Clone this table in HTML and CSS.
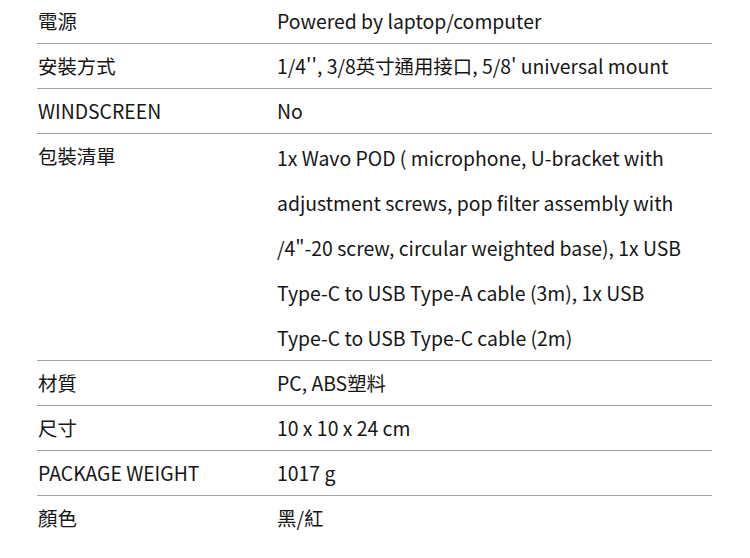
FILE: index.html
```html
<!DOCTYPE html>
<html lang="zh-Hant">
<head>
<meta charset="utf-8">
<link rel="stylesheet" href="styles.css">
</head>
<body>
<div class="specs">
  <div class="row"><div class="label">電源</div><div class="value">Powered by laptop/computer</div></div>
  <div class="row"><div class="label">安裝方式</div><div class="value">1/4'', 3/8英寸通用接口, 5/8' universal mount</div></div>
  <div class="row"><div class="label">WINDSCREEN</div><div class="value">No</div></div>
  <div class="row"><div class="label">包裝清單</div><div class="value value--long">1x Wavo POD ( microphone, U-bracket with adjustment screws, pop filter assembly with /4"-20 screw, circular weighted base), 1x USB Type-C to USB Type-A cable (3m), 1x USB Type-C to USB Type-C cable (2m)</div></div>
  <div class="row"><div class="label">材質</div><div class="value">PC, ABS塑料</div></div>
  <div class="row"><div class="label">尺寸</div><div class="value">10 x 10 x 24 cm</div></div>
  <div class="row"><div class="label">PACKAGE WEIGHT</div><div class="value">1017 g</div></div>
  <div class="row row--last"><div class="label">顏色</div><div class="value">黑/紅</div></div>
</div>
</body>
</html>
```

FILE: styles.css
```css
html, body {
  margin: 0;
  padding: 0;
  background: #fff;
}
body {
  font-family: "Noto Sans CJK TC", "Noto Sans", sans-serif;
  font-size: 19.4px;
  color: #161616;
}
.specs {
  margin: -1px 0 0 37px;
  width: 675px;
}
.row {
  display: flex;
  border-bottom: 1px solid #a3a3a3;
  line-height: 44px;
}
.row--last {
  border-bottom: none;
}
.label {
  width: 240px;
  flex: none;
  padding-left: 1px;
  box-sizing: border-box;
}
.value {
  flex: 1;
  padding-right: 20px;
}
.value--long {
  line-height: 45px;
  padding-top: 1px;
}
```
